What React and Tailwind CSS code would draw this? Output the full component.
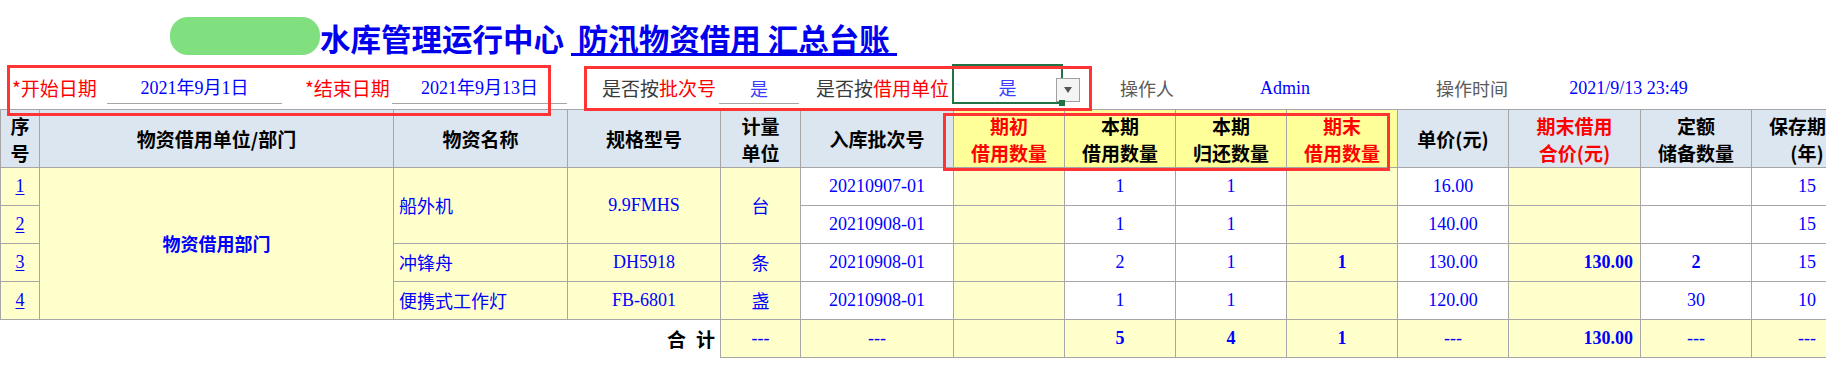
const line = "border border-[#a6a6a6]";
const head = `${line} p-0 text-center align-middle font-bold text-[19px] leading-[27px]`;
const cell = `${line} p-0 text-center align-middle font-['Liberation_Serif','Noto_Sans_CJK_SC',serif] text-[18px] text-[#0000ff]`;
const yellow = "bg-[#ffffcc]";

const rows = [
  { no: "1", batch: "20210907-01", borrow: "1", ret: "1", end: "", price: "16.00", amount: "", quota: "", keep: "15" },
  { no: "2", batch: "20210908-01", borrow: "1", ret: "1", end: "", price: "140.00", amount: "", quota: "", keep: "15" },
  { no: "3", name: "冲锋舟", spec: "DH5918", unit: "条", batch: "20210908-01", borrow: "2", ret: "1", end: "1", price: "130.00", amount: "130.00", quota: "2", boldQuota: true, keep: "15" },
  { no: "4", name: "便携式工作灯", spec: "FB-6801", unit: "盏", batch: "20210908-01", borrow: "1", ret: "1", end: "", price: "120.00", amount: "", quota: "30", keep: "10" },
];

const FilterBar = () => {
  return (
    <div className="flex h-[40px] items-end whitespace-nowrap text-[19px] leading-[26px]">
      <div className="w-[107px] shrink-0 pb-[3px] pl-[12px] text-[#ff0000]">*开始日期</div>
      <div className="w-[175px] shrink-0 border-b border-[#a6a6a6] pb-[2px] text-center font-['Liberation_Serif','Noto_Sans_CJK_SC',serif] text-[18px] text-[#0000ff]">
        2021年9月1日
      </div>
      <div className="w-[110px] shrink-0 pb-[3px] pl-[23px] text-[#ff0000]">*结束日期</div>
      <div className="w-[175px] shrink-0 border-b border-[#a6a6a6] pb-[2px] text-center font-['Liberation_Serif','Noto_Sans_CJK_SC',serif] text-[18px] text-[#0000ff]">
        2021年9月13日
      </div>
      <div className="w-[152px] shrink-0 pb-[3px] pl-[35px] text-[#3a3a3a]">
        是否按<span className="text-[#ff0000]">批次号</span>
      </div>
      <div className="w-[80px] shrink-0 border-b border-[#a6a6a6] pb-[2px] text-center text-[18px] text-[#3b3bff]">是</div>
      <div className="w-[153px] shrink-0 pb-[3px] pl-[17px] text-[#3a3a3a]">
        是否按<span className="text-[#ff0000]">借用单位</span>
      </div>
      <div className="relative flex h-[40px] w-[111px] shrink-0 items-end justify-center border-2 border-[#217346] pb-[2px] text-[18px] text-[#3b3bff]">
        是
        <div className="absolute left-[102px] top-[12px] flex h-[24px] w-[24px] items-center justify-center border border-[#a0a0a0] bg-[#f4f4f4]">
          <div className="h-0 w-0 border-x-[4px] border-t-[6px] border-x-transparent border-t-[#555]"></div>
        </div>
        <div className="absolute bottom-[-4px] right-[-4px] h-[6px] w-[6px] bg-[#217346]"></div>
      </div>
      <div className="w-[111px] shrink-0 pb-[3px] pl-[57px] text-[18px] text-[#5a5a5a]">操作人</div>
      <div className="w-[222px] shrink-0 pb-[3px] text-center font-['Liberation_Serif',serif] text-[18px] text-[#0000ff]">Admin</div>
      <div className="w-[111px] shrink-0 pb-[3px] pl-[40px] text-[18px] text-[#5a5a5a]">操作时间</div>
      <div className="w-[243px] shrink-0 pb-[3px] text-center font-['Liberation_Serif',serif] text-[18px] text-[#0000ff]">
        2021/9/13 23:49
      </div>
    </div>
  );
};

const LedgerTable = () => {
  return (
    <table className="mt-[5px] w-[1862px] table-fixed border-collapse">
      <colgroup>
        <col className="w-[39px]" />
        <col className="w-[354px]" />
        <col className="w-[174px]" />
        <col className="w-[153px]" />
        <col className="w-[80px]" />
        <col className="w-[153px]" />
        <col className="w-[111px]" />
        <col className="w-[111px]" />
        <col className="w-[111px]" />
        <col className="w-[111px]" />
        <col className="w-[111px]" />
        <col className="w-[132px]" />
        <col className="w-[111px]" />
        <col className="w-[111px]" />
      </colgroup>
      <thead>
        <tr className="h-[58px]">
          <th className={`${head} bg-[#dce6f1] text-black`}>序<br />号</th>
          <th className={`${head} bg-[#dce6f1] text-black`}>物资借用单位/部门</th>
          <th className={`${head} bg-[#dce6f1] text-black`}>物资名称</th>
          <th className={`${head} bg-[#dce6f1] text-black`}>规格型号</th>
          <th className={`${head} bg-[#dce6f1] text-black`}>计量<br />单位</th>
          <th className={`${head} bg-[#dce6f1] text-black`}>入库批次号</th>
          <th className={`${head} bg-[#ffff99] text-[#ff0000]`}>期初<br />借用数量</th>
          <th className={`${head} bg-[#ffff99] text-black`}>本期<br />借用数量</th>
          <th className={`${head} bg-[#ffff99] text-black`}>本期<br />归还数量</th>
          <th className={`${head} bg-[#ffff99] text-[#ff0000]`}>期末<br />借用数量</th>
          <th className={`${head} bg-[#dce6f1] text-black`}>单价(元)</th>
          <th className={`${head} bg-[#dce6f1] text-[#ff0000]`}>期末借用<br />合价(元)</th>
          <th className={`${head} bg-[#dce6f1] text-black`}>定额<br />储备数量</th>
          <th className={`${head} bg-[#dce6f1] whitespace-nowrap text-black`}>保存期限<br />(年)</th>
        </tr>
      </thead>
      <tbody>
        {rows.map((row, i) => (
          <tr key={row.no} className="h-[38px]">
            <td className={`${cell} ${yellow}`}>
              <span className="underline underline-offset-2">{row.no}</span>
            </td>
            {i === 0 && (
              <td rowSpan={4} className={`${cell} ${yellow} font-['Noto_Sans_CJK_SC',sans-serif] text-[17px] font-bold`}>
                物资借用部门
              </td>
            )}
            {i === 0 && (
              <>
                <td rowSpan={2} className={`${cell} ${yellow} pl-[5px] text-left font-['Noto_Sans_CJK_SC',sans-serif] text-[16px]`}>船外机</td>
                <td rowSpan={2} className={`${cell} ${yellow}`}>9.9FMHS</td>
                <td rowSpan={2} className={`${cell} ${yellow} font-['Noto_Sans_CJK_SC',sans-serif] text-[17px]`}>台</td>
              </>
            )}
            {i > 1 && (
              <>
                <td className={`${cell} ${yellow} pl-[5px] text-left font-['Noto_Sans_CJK_SC',sans-serif] text-[16px]`}>{row.name}</td>
                <td className={`${cell} ${yellow}`}>{row.spec}</td>
                <td className={`${cell} ${yellow} font-['Noto_Sans_CJK_SC',sans-serif] text-[17px]`}>{row.unit}</td>
              </>
            )}
            <td className={cell}>{row.batch}</td>
            <td className={`${cell} ${yellow}`}></td>
            <td className={cell}>{row.borrow}</td>
            <td className={cell}>{row.ret}</td>
            <td className={`${cell} ${yellow} font-bold`}>{row.end}</td>
            <td className={cell}>{row.price}</td>
            <td className={`${cell} ${yellow} pr-[7px] text-right font-bold`}>{row.amount}</td>
            <td className={`${cell} ${row.boldQuota ? "font-bold" : ""}`}>{row.quota}</td>
            <td className={cell}>{row.keep}</td>
          </tr>
        ))}
        <tr className="h-[38px]">
          <td colSpan={4} className="p-0 pr-[5px] text-right align-middle text-[19px] font-bold text-black">
            合<span className="ml-[10px]">计</span>
          </td>
          <td className={`${cell} ${yellow}`}>---</td>
          <td className={`${cell} ${yellow}`}>---</td>
          <td className={`${cell} ${yellow}`}></td>
          <td className={`${cell} ${yellow} font-bold`}>5</td>
          <td className={`${cell} ${yellow} font-bold`}>4</td>
          <td className={`${cell} ${yellow} font-bold`}>1</td>
          <td className={`${cell} ${yellow}`}>---</td>
          <td className={`${cell} ${yellow} pr-[7px] text-right font-bold`}>130.00</td>
          <td className={`${cell} ${yellow}`}>---</td>
          <td className={`${cell} ${yellow}`}>---</td>
        </tr>
      </tbody>
    </table>
  );
};

const App = () => {
  return (
    <div className="relative h-[374px] w-[1826px] overflow-hidden bg-white font-['Noto_Sans_CJK_SC',sans-serif]">
      <div className="flex h-[64px] items-start pl-[170px]">
        <div className="mt-[17px] h-[38px] w-[150px] shrink-0 rounded-[18px] bg-[#80e080]"></div>
        <h1 className="mt-[23px] whitespace-pre text-[30.5px] font-bold leading-[30px] text-[#0000ee]">
          水库管理运行中心{" "}
          <span className="inline-block border-b-[3px] border-[#0000ee] leading-[30px]"> 防汛物资借用 汇总台账 </span>
        </h1>
      </div>

      <FilterBar />
      <LedgerTable />

      {/* red highlight frames drawn over the sheet */}
      <div className="pointer-events-none absolute left-[7px] top-[65px] h-[51px] w-[544px] border-[3px] border-[#ff3535]"></div>
      <div className="pointer-events-none absolute left-[584px] top-[66px] h-[45px] w-[508px] border-[3px] border-[#ff3535]"></div>
      <div className="pointer-events-none absolute left-[943px] top-[113px] h-[58px] w-[447px] border-[3px] border-[#ff3535]"></div>
    </div>
  );
};

export default App;
